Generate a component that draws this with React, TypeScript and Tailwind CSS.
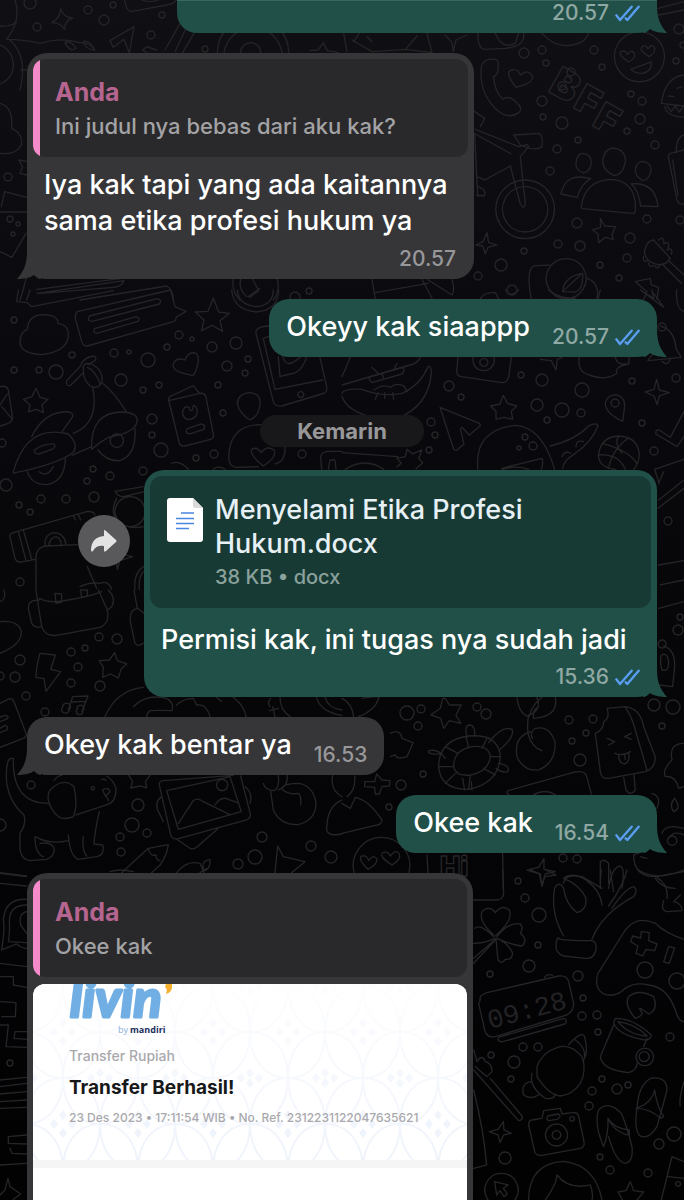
import type { ReactNode } from "react";

type Tile = { x: number; y: number; paths: string[] };

// Each tile holds its outlines at three times the drawn size.
const doodleTiles: Tile[] = [
  {
    x: 0,
    y: 0,
    paths: [
      "M182 26 Q188 52 218 54 Q194 62 194 88 Q182 68 155 68 Q180 56 182 26Z",
      "M45 0 Q65 60 20 118 Q70 118 120 130 Q180 110 240 128 Q280 130 285 152",
      "M0 78 Q28 82 50 66 M0 135 Q38 150 40 195 Q40 235 0 252",
      "M30 120 Q85 170 60 270 M62 210 L80 210",
      "M195 128 Q210 118 228 145 Q210 158 195 128Z M250 124 Q270 120 282 150 Q258 150 250 124Z",
      "M0 310 Q40 320 35 385 Q70 400 64 435 Q50 465 0 460",
      "M374 0 Q378 30 392 35 L500 15 Q526 10 528 0 M425 0 Q450 10 475 0",
      "M330 122 L402 80 L388 158 L372 118 L340 142Z M440 140 L428 150 L442 160 M440 140 L470 150",
      "M545 62 L495 150 M560 80 L525 155 M582 100 L548 158",
      "M652 158 A106 106 0 0 1 866 158 M672 158 A88 88 0 0 1 846 158 M722 158 A30 30 0 0 1 782 158",
      "M930 152 L955 150 L970 128 L982 152 L1015 158",
      "M4 620 L14 575 L80 592 M0 636 L80 636 M0 755 L36 772 L78 700",
      "M56 480 L80 484 M80 525 L60 520 L68 500 L56 480",
      "M78 836 Q70 870 60 900 M110 868 L360 836 M112 880 L372 842 Q366 860 340 862 L120 880Z M500 858 L240 900 M500 858 Q520 870 520 900",
      "M700 838 A70 70 0 0 0 720 900 M832 838 A70 70 0 0 1 820 900 M722 838 A50 50 0 0 0 740 890 M758 838 L776 872 L750 892",
    ],
  },
  {
    x: 342,
    y: 0,
    paths: [
      "M418 200 Q425 174 460 178 Q472 180 468 205 Q470 222 455 230 Q458 275 482 298 Q500 284 522 306 Q545 325 530 338 Q500 360 465 330 Q410 280 418 200Z",
      "M522 262 Q485 215 510 210 Q528 205 536 226 Q555 205 570 226 Q580 248 522 262Z",
      "M892 95 a75 75 0 1 0 1 0Z",
      "M860 186 Q820 158 842 153 Q852 152 856 164 Q868 146 877 160 Q884 172 860 186Z M922 170 Q885 148 904 138 Q914 136 918 147 Q928 130 937 142 Q944 154 922 170Z",
      "M866 208 L928 186 Q930 215 902 220 Q882 222 866 208Z",
      "M958 310 Q970 230 1026 225 M958 310 L1026 318 M968 320 Q975 350 1026 352 M975 318 L988 335 L1000 318 L1012 336 L1024 320 M980 288 L995 290 M1005 265 L1020 260",
      "M398 335 L428 355 L415 380 M400 388 L530 440 L555 434 L560 440 L535 470 L550 612 Q545 630 535 612 L505 498 L428 540 L404 530 L398 400 M400 402 L508 462",
      "M515 405 L590 400 Q604 405 600 440 Q580 455 535 435 L515 405Z",
      "M404 530 L408 590 M410 560 Q438 575 425 588 L404 585",
      "M549 540 a88 88 0 1 0 1 0Z M549 560 a68 68 0 1 0 1 0Z",
      "M725 460 Q750 465 748 490 Q742 520 722 518 Q700 510 702 488 Q705 460 725 460Z M815 444 Q852 450 850 485 Q842 528 815 526 Q780 510 782 480 Q788 445 815 444Z M903 484 Q930 490 927 512 Q920 542 902 542 Q880 530 880 508 Q885 484 903 484Z",
      "M718 620 Q728 540 810 538 Q885 545 880 632 Q880 642 870 640 L722 626 Q717 625 718 620Z M746 536 Q670 515 657 582 L706 592 Q715 555 746 536Z M868 552 Q940 545 948 620 L896 618 Q890 570 868 552Z",
      "M775 655 L788 678 L820 680 L810 705 L814 718 L790 712 L770 728 L768 702 L752 690 L776 682Z",
      "M435 698 L440 728 L465 735 L438 742 L430 762 L422 738 L402 735 L424 724Z",
      "M908 750 Q915 722 935 720 L985 775 Q970 800 940 792 Q905 780 908 750Z M950 720 Q965 705 966 730 M965 732 Q985 720 978 745 M975 750 Q995 742 988 762 M905 770 Q900 788 918 782 M920 788 Q920 805 935 796 M940 798 Q945 810 955 795",
      "M978 780 L1026 825 M960 792 L1018 850",
      "M980 475 Q975 460 995 458 L1026 450 M980 475 L1005 600 Q1010 615 1026 612 M1003 458 Q1002 410 1026 405 M992 480 L1008 585",
      "M568 898 Q550 800 580 797 L630 795 M672 776 a60 60 0 1 0 1 0Z M662 875 Q665 830 722 820 Q724 870 700 876Z M662 875 L715 825 M736 835 Q775 850 765 898",
      "M880 845 L925 835 L928 855 L950 862 L945 898 M880 845 L915 875 L905 898",
      "M30 120 L90 155 L190 148 L270 158 M55 95 L35 125 M190 148 L225 108 M75 110 L90 125 M255 100 L270 158 M5 100 L15 155 M310 105 L330 128 L334 155 L342 120 L375 105",
      "M408 100 Q405 145 430 148 L490 145 Q550 140 545 100 M460 100 Q480 150 520 130 L530 100 M600 100 Q640 145 690 135 Q730 130 740 100 M948 25 L1026 5 M950 45 L1026 30",
      "M90 838 L100 898 M240 838 L270 895 M255 838 L330 885 Q340 870 330 838 M100 878 L258 850",
    ],
  },
  {
    x: 0,
    y: 290,
    paths: [
      "M55 0 L50 35 L82 38 L95 50 L340 2 M90 0 L80 30",
      "M232 65 L512 0 L525 50 L558 64 L528 82 Q530 95 510 98 L262 168 Q250 170 245 155 L226 85 Q225 70 232 65Z",
      "M268 78 L472 26 Q488 30 478 42 L276 94 Q260 94 268 78Z M284 116 L408 80 Q424 84 414 94 L290 130 Q276 128 284 116Z",
      "M82 118 Q85 75 130 74 Q175 75 174 100 Q210 105 204 145 Q195 185 125 194 Q60 190 60 155 Q62 125 82 118Z",
      "M640 24 L656 66 L688 70 L660 92 L668 124 L636 106 L605 122 L612 90 L586 66 L624 64Z",
      "M695 0 Q700 60 770 66 Q835 60 836 0 M712 0 Q715 45 770 50 Q820 45 820 0 M745 20 L780 -5",
      "M568 254 Q515 245 520 222 Q530 200 555 210 Q565 182 588 190 Q605 205 582 254 Q576 258 568 254Z",
      "M108 295 L120 322 L144 328 L126 344 L130 368 L108 358 L86 366 L90 344 L70 328 L96 320Z",
      "M0 290 Q20 285 25 300 L38 385 Q38 400 0 408 M0 345 L22 312 M5 350 L35 385",
      "M240 230 Q245 205 280 198 Q292 200 285 212 L265 224 M240 230 L200 272 Q196 290 212 286 L248 250",
      "M250 240 Q245 215 275 222 Q310 240 306 275 Q295 300 270 288 Q250 270 250 240Z M262 232 Q285 240 300 280 M278 290 Q300 400 220 430 M308 280 Q345 310 378 364",
      "M95 440 Q130 370 190 366 Q220 362 218 380 L186 426 M40 545 Q80 400 205 432 Q235 460 222 485 Q180 520 46 548 Q38 552 40 545Z M104 480 Q130 460 162 462 Q170 470 155 478 L118 492 Q100 492 104 480Z",
      "M275 478 Q270 365 370 366 Q420 370 410 400 Q400 430 325 442 Q300 455 275 478Z M216 496 L275 470 M82 545 Q95 585 140 584 Q195 575 196 505 M294 480 Q320 515 360 512 Q410 495 405 415 M350 432 a20 20 0 1 0 1 0Z M118 545 Q140 565 160 530",
      "M506 330 Q505 320 520 315 L580 287 L598 310 M506 330 L538 460 Q542 470 555 468 L632 448 Q643 444 640 432 L618 322 Q615 308 600 310 L506 332",
      "M556 350 Q540 370 555 385 Q575 395 590 375 Q596 350 580 346 L578 360 Q568 365 568 352Z M562 416 L604 402 Q618 404 612 418 L570 432 Q552 430 562 416Z",
      "M750 308 Q785 312 780 345 Q775 380 750 390 Q718 370 712 340 Q715 310 750 308Z",
      "M806 108 Q765 110 768 130 L820 335 Q825 350 845 348 L965 312 Q985 308 980 290 L960 202 M806 140 L790 145 L825 298 L968 270 M835 200 L840 260 L870 252 Q905 250 920 200 M848 200 Q860 240 900 202 M902 305 a9 9 0 1 0 1 0Z",
      "M792 404 Q700 400 688 480 Q680 530 710 532 L775 530 M792 404 L835 410 M855 470 Q858 515 825 522 M790 528 Q748 495 755 478 Q770 468 784 488 Q800 465 822 480 Q832 500 790 528Z",
      "M965 538 L962 500 Q965 485 985 484 L1026 484 M985 538 L990 510 L1005 510 L1008 538",
      "M345 604 L430 590 M345 604 Q355 625 380 618 L432 605 M388 620 a45 45 0 1 0 5 0Z M350 625 Q330 665 350 690 Q380 720 430 710",
      "M30 740 Q25 730 50 725 L260 665 Q280 662 285 675 M30 740 L45 805 Q50 820 70 815 L105 808 M55 724 L78 812 M70 720 L95 808 M220 678 L226 690 M235 674 L242 690",
      "M108 898 L108 800 Q110 770 140 768 L232 764 M135 768 Q132 735 160 728 Q192 728 198 762 M146 768 Q150 742 168 740 Q182 745 184 764 M262 830 L290 895 M240 890 Q270 875 300 880 Q325 870 335 898",
      "M375 795 L398 800 L360 812 L352 838 L348 812 M405 898 Q400 850 430 830 M418 898 Q415 860 430 845 M515 520 Q540 510 565 538 M640 538 Q655 525 675 538",
    ],
  },
  {
    x: 342,
    y: 290,
    paths: [
      "M0 285 L215 222 Q230 215 235 202 M0 260 L25 202 M0 310 Q5 295 60 298 Q120 322 180 310 Q235 285 258 230 Q268 225 268 250 Q260 350 160 388 M0 318 Q10 355 70 376",
      "M78 262 L180 232 Q192 238 180 252 L90 278Z M120 250 L125 264 M90 232 L108 250 M155 240 L165 220 M95 300 Q125 280 145 292 Q165 275 188 290 M100 328 L108 308 M128 325 L128 308 M155 328 L152 308 M196 305 L186 290",
      "M348 202 L344 245 Q345 258 358 260 L480 278 Q495 278 500 262 L508 202 M394 202 A32 32 0 1 0 456 202 M425 205 a12 12 0 1 0 1 0Z",
      "M595 208 L628 212 L642 240 L646 208 L660 202 M712 202 Q705 245 740 254 Q790 275 825 250 Q815 230 860 222 L862 202 M820 202 Q825 225 850 222",
      "M918 212 L1018 202 M918 212 Q930 190 952 180 M955 108 Q998 120 1002 175 L1018 202 M960 214 Q975 230 985 208",
      "M842 394 Q790 370 790 340 Q795 315 822 314 Q850 320 848 350Z",
      "M944 268 L952 300 L982 308 L952 318 L946 344 L936 318 L910 306 L936 298Z",
      "M294 352 L412 400 Q418 408 410 412 L382 435 L360 412 Q352 415 358 428 L366 462 L345 480 Q336 482 334 475Z",
      "M484 316 L496 340 L524 348 L508 364 L512 388 L486 382 L462 388 L462 364 L446 348 L474 342Z",
      "M408 538 Q395 420 520 406 Q600 410 638 538 M560 538 Q520 525 480 538 M480 535 L600 505 Q605 520 598 538 M625 468 Q700 450 740 408 Q765 395 768 408 Q750 455 700 490 Q665 510 662 535 M660 500 Q670 480 685 490 M702 470 Q702 448 725 455",
      "M820 538 Q765 530 770 490 Q780 440 830 438 Q885 440 892 490 Q892 520 875 538 M780 460 Q860 480 884 520 M800 535 Q810 480 858 445 M770 495 Q830 490 850 538 M830 438 Q815 460 840 490",
      "M942 432 Q940 418 952 420 L985 442 L1026 365 M942 432 L1005 470 L1026 440",
      "M938 538 L1026 508 M938 538 Q955 590 950 580 L965 545 M948 655 L1026 595 M950 630 L1026 570 M950 825 L1026 812 M955 885 L1026 870",
      "M0 488 L168 500 M195 478 L212 492 L240 480 L230 505 L242 518 L222 536 M165 505 L190 500 L195 478 M165 505 L178 520 L165 530 M10 538 Q70 500 125 538",
      "M895 0 L935 25 L930 0 M895 0 L965 52 L935 10 M1004 0 Q1000 55 1026 65 M415 27 Q425 5 460 8 L470 27 M490 0 Q505 25 530 0 M620 0 Q650 25 700 26 M775 0 L768 26",
    ],
  },
  {
    x: 0,
    y: 590,
    paths: [
      "M108 0 L125 110 Q135 140 170 136 L300 112 Q330 100 322 60 L295 0 M118 25 Q150 42 205 30 Q270 20 305 5 M165 10 L185 12 L185 36 L168 40Z M242 0 L262 0 L262 18 L245 22Z M118 30 Q80 30 86 60 L95 100 Q105 115 125 110 M325 0 Q350 25 335 50 L322 60",
      "M0 95 Q55 90 64 125 Q65 165 0 190 M0 35 Q20 28 12 0 M402 0 L412 55 L432 70 M412 55 Q385 60 392 100 L405 160 Q415 172 430 160",
      "M120 190 L166 195 L152 238 L182 245 L138 304 L132 266 L108 262 Q108 230 120 190Z",
      "M344 188 L352 212 L380 222 L364 236 L355 264 L332 252 L308 262 L310 232 L298 212 L328 210Z",
      "M218 320 L264 318 L246 364 M218 320 L205 360 M212 336 L258 334 M188 352 a12 10 0 1 0 20 5 a12 10 0 1 0 -20 -5Z M232 358 a10 9 0 1 0 16 4 a10 9 0 1 0 -16 -4Z",
      "M0 340 L28 326 Q38 326 42 335 L78 430 Q82 440 70 445 L0 472 M0 382 L15 376 Q28 378 22 386 L0 395 M0 415 L15 406 Q28 410 20 420 L0 428",
      "M315 380 Q350 300 430 292 M400 350 Q440 310 500 325 Q525 340 515 362 Q480 360 450 362 Q440 370 440 380 M530 345 Q550 325 580 325 L590 345 Q620 340 630 380 M650 322 L665 335 M700 322 Q735 350 738 380 M810 350 Q800 340 812 325 M808 362 L835 355 M818 350 L825 380 M840 322 Q840 360 870 380 M950 322 Q960 365 1026 376 M975 322 Q985 355 1026 360",
      "M38 505 Q15 500 20 580 Q30 640 72 675 Q80 700 60 730 L60 780 Q65 810 90 812 L140 808 Q165 800 162 775 Q155 755 120 760 M40 505 Q35 640 145 640 M105 740 Q150 765 205 752 M205 735 Q210 800 235 808 L290 800 Q315 795 308 765 L282 762 Q285 720 298 665 M250 740 Q245 780 260 798 M105 740 Q105 790 130 800",
      "M150 600 Q190 560 222 590 Q235 650 220 680 Q185 695 165 670 Q140 640 145 612Z M162 572 Q170 558 185 556 M228 675 L320 645 Q350 635 348 595 Q340 570 320 558 M278 590 a5 5 0 1 0 1 0Z M308 600 Q325 590 330 605 L316 618Z M318 618 L326 632 M305 570 Q310 562 318 572",
      "M478 585 Q475 575 490 572 L700 556 M478 585 L512 735 Q518 750 535 746 L740 690 Q755 682 750 668 L722 558 M500 602 L690 560 L724 665 L535 718Z M535 700 L580 632 Q592 622 608 634 L690 674 M645 645 Q665 615 690 630 L712 638 M666 568 a17 17 0 1 0 1 0Z M484 620 Q460 640 478 670 L490 695 M736 590 Q760 610 750 640 M530 748 L570 775 Q580 780 590 772 L655 715",
      "M386 556 L398 574 L392 594 L420 588 L440 594 L436 574 L450 556",
      "M790 580 Q795 600 822 602 Q840 595 835 556 M835 600 Q865 590 862 556 M812 602 L820 660 Q840 705 895 704 Q950 690 948 635 Q935 580 890 580 Q840 582 848 600 Q870 615 895 610 Q905 620 902 645 M998 556 Q990 600 1026 620 M1026 630 Q980 650 980 720 Q985 740 1026 732",
      "M365 848 L445 775 L505 764 Q500 800 480 825 L455 848 M445 775 Q450 800 468 795 Q468 810 480 812 M530 848 Q560 810 600 820 L612 848 M612 838 Q600 815 630 808 Q632 835 615 842 M833 768 L850 800 L915 815 L875 848 M833 768 L825 848",
      "M0 848 L80 858 M0 880 L80 888",
    ],
  },
  {
    x: 342,
    y: 590,
    paths: [
      "M310 325 L322 345 L358 345 L342 375 L356 400 L322 392 L305 415 L296 385 L266 375 L295 355 L302 325Z",
      "M375 440 Q365 405 385 405 Q400 408 398 438 M440 458 Q480 405 510 418 Q520 440 472 480 M298 492 Q255 495 260 482 Q290 475 310 505 M470 520 Q505 525 498 545 Q480 550 462 535 M368 600 L362 565 M390 600 L388 575",
      "M290 530 Q290 450 380 438 Q470 430 475 500 Q470 580 380 598 Q295 600 290 530Z M335 530 Q335 480 390 470 Q440 465 445 500 Q440 545 385 555 Q340 560 335 530Z M310 470 L348 490 M372 440 L380 472 M435 445 L420 475 M475 500 L445 500 M460 555 L425 535 M385 555 L380 598 M345 545 L310 580 M335 530 L290 530",
      "M525 322 Q530 370 560 380 M562 378 Q570 345 600 322 M562 375 Q600 360 585 322 M640 322 Q650 380 575 385 Q570 360 590 350 M560 375 Q545 460 600 482 M566 425 Q515 440 525 500 Q545 545 590 540 Q640 520 640 460 Q625 405 580 415 Q560 430 572 445",
      "M795 355 L850 350 Q895 355 905 410 L940 500 Q940 535 910 545 L800 565 Q778 568 775 545 L760 430 Q785 420 785 395 Q805 385 795 355Z M850 352 Q870 380 880 420 L915 540 M845 562 L852 600 Q865 620 880 600 L876 555",
      "M796 445 L818 455 L800 465 M868 430 L848 440 L868 448 M818 490 Q840 500 865 485 M830 495 Q830 520 848 522 Q865 515 860 490 M848 495 L850 508",
      "M145 430 Q175 415 180 445 L213 458 L195 500 Q165 510 160 495 L145 500 M104 552 L120 570 L144 572 L142 588 L120 590 L112 612 L100 612 L98 592 L68 590 L68 575 L98 575Z M38 558 Q42 600 15 620 M0 640 L25 655 L40 622 Q80 630 120 690 Q120 705 100 706 L0 730",
      "M498 602 L700 546 Q730 540 735 562 L748 612 M498 602 Q490 610 500 614 M575 614 Q610 595 640 614",
      "M116 742 a85 85 0 0 1 85 106 M116 742 a85 85 0 0 0 -80 106 M78 838 Q45 805 60 798 Q75 795 80 812 Q95 790 105 808 Q105 825 78 838Z M150 825 Q110 800 122 788 Q138 782 145 798 Q162 775 172 792 Q178 808 150 825Z",
      "M606 806 L606 838 L640 845 L610 852 L600 888 L592 852 L562 838 L590 832Z M665 880 Q670 850 720 860 L780 895 M775 895 L775 815 Q785 805 800 820 L800 880 M800 895 Q810 830 835 828 Q850 835 840 895",
      "M875 795 Q875 860 940 860 L1026 845 M875 795 L915 780 M895 800 L915 805 M1026 715 Q970 700 960 730 M1026 735 Q995 720 980 745 M990 738 a14 14 0 1 0 1 0Z M940 865 Q960 895 1000 895",
      "M1026 460 Q980 460 990 510 Q960 540 970 560 Q1000 555 1010 595 L1026 590 M930 610 Q960 620 945 655 M998 625 Q980 645 995 665 Q1020 655 998 625Z",
      "M950 55 L1026 35 M960 150 a12 12 0 1 0 1 0Z M965 168 Q1000 180 998 230 L992 290 L950 285 M958 195 Q978 185 980 220 Q980 245 960 240 Q952 215 958 195Z",
      "M255 795 L258 848 M482 790 L484 898 M0 325 Q30 340 35 380 M60 325 Q120 315 110 325 Q100 360 50 380",
    ],
  },
  {
    x: 0,
    y: 870,
    paths: [
      "M80 88 Q15 85 10 150 Q15 175 5 240 L50 222 Q65 235 80 235 M80 105 Q30 105 28 150 Q30 190 25 215 L80 218 M80 125 Q55 130 62 165 L80 190",
      "M0 280 L80 290 M0 320 L40 320 L40 345 L80 352 M2 395 L48 398 L46 440 L5 440 M0 465 L25 465 L18 530 L80 532 M80 485 L45 485 L42 505 L80 508",
      "M0 630 L80 622 M0 650 L80 640 M0 672 L80 665 M0 695 L80 690 M0 715 L80 712 M25 800 L80 795 M25 800 L25 820 L80 822 M30 835 L35 850 L80 852 M0 885 L80 880",
      "M24 925 L30 950 L62 972 L38 990 M24 925 L15 960 L0 975",
      "M0 10 L80 20 M330 5 Q360 -5 400 5 M600 8 L620 -4",
    ],
  },
  {
    x: 342,
    y: 870,
    paths: [
      "M395 90 L465 90 Q485 88 485 70 L482 0",
      "M455 195 Q405 150 422 122 Q445 105 460 128 Q480 102 502 120 Q515 150 460 198 M465 200 Q500 155 535 162 Q545 175 535 190 Q560 210 540 228 Q510 225 465 205 M462 205 L468 270 Q478 285 490 268 Q510 270 512 250 Q500 220 465 205 M455 200 Q415 160 398 175 M395 220 Q430 220 458 205 M395 265 L458 210 M395 280 L460 210",
      "M645 205 Q662 212 750 212 Q765 215 762 240 Q755 268 730 265 L665 258 Q640 250 642 225 Q642 210 650 203 M665 198 Q625 130 638 55 Q650 30 665 55 Q670 100 705 128 Q735 120 732 85 Q715 45 665 25 Q690 5 730 28 Q775 60 780 105 M750 208 Q780 130 875 80 Q890 60 875 50 Q850 55 810 115 M775 30 L778 0 M800 108 Q845 45 855 0 M805 0 L815 65",
      "M555 0 L595 12 L600 48 L608 20 L642 15 L612 0 M890 0 Q940 35 1026 0 M945 22 Q980 45 975 85 M965 92 Q955 120 975 125 L1020 122 Q1020 100 995 95 L1015 75",
      "M1026 208 Q970 190 940 160 Q885 135 850 180 L768 310 Q755 355 785 372 Q820 385 850 355 Q880 335 920 345 Q975 350 1000 420 Q1010 455 1026 455",
      "M898 185 L922 188 L920 212 L945 222 L938 242 L912 238 L902 258 L882 250 L888 228 L866 215 L872 198 L896 204Z M980 230 L998 234 L982 280 L965 276Z",
      "M415 390 Q410 375 435 368 L650 318 Q675 315 680 335 L695 400 Q695 425 675 435 L460 500 Q435 505 428 480 L410 400Z M470 502 L665 445 Q680 450 668 462 L480 516 Q462 512 470 502Z M608 322 Q615 310 632 316",
      "M585 590 Q600 545 655 530 Q690 525 720 560 Q735 600 715 640 Q690 675 655 678 Q620 675 585 620Z M680 524 Q720 480 728 500 Q740 550 725 570 M700 510 Q730 530 728 560 M570 610 Q560 650 610 685 Q635 690 640 672 M568 635 Q535 640 545 675 Q565 690 590 675",
      "M820 445 Q875 445 928 495 Q925 515 900 508 Q830 495 815 460Z M828 455 Q880 462 915 498 Q860 495 828 455Z M815 465 L775 560 Q780 600 860 608 Q885 600 885 580 M915 505 L905 530 M908 535 a26 26 0 1 0 1 0Z M906 545 a15 15 0 1 0 1 0Z M880 445 Q845 405 860 380 Q890 355 935 380 Q950 420 920 432 Q885 405 895 420 Q910 435 880 445Z",
      "M395 540 L405 575 Q420 550 430 575 Q450 580 450 605 L435 620 L400 590 M395 600 L530 752 Q545 750 540 738 L445 625",
      "M570 750 Q560 750 560 765 L578 845 Q582 858 600 856 L715 835 Q730 830 726 815 L710 738 Q705 725 690 728 L660 732 L655 715 L605 722 L600 745Z M618 738 L650 732 Q660 740 645 748 L620 752 Q610 745 618 738Z M643 762 a33 33 0 1 0 1 0Z M643 782 a13 13 0 1 0 1 0Z M690 740 a7 7 0 1 0 1 0Z",
      "M785 830 Q755 760 770 720 Q800 690 838 730 Q855 770 870 830 Q875 875 850 880 Q820 875 800 800 M785 830 Q800 790 798 745 M798 745 Q820 790 862 795 L862 780 Q815 775 798 745",
      "M885 715 Q890 640 930 624 Q975 620 975 660 Q965 700 945 770 Q920 810 895 798 Q875 780 885 715Z M882 715 Q930 700 938 660 Q945 710 965 740 L955 745 Q925 715 882 715",
      "M484 755 L486 780 L508 790 L485 795 L474 818 L468 795 L442 785 L468 778Z M395 660 Q425 780 434 885 L395 895",
      "M478 910 a50 50 0 1 0 1 0Z M458 935 L498 945 L484 955 L496 972 L486 980 L474 962 L464 975Z",
      "M560 990 Q560 880 665 874 Q760 885 780 990 M610 990 Q645 940 645 915 Q680 960 745 945 Q755 970 750 990",
      "M865 935 L875 962 L905 966 L885 990 M865 935 L852 962 L828 966 L842 990 M990 860 L958 990 M990 860 L1026 875 M978 920 L1026 925 M1008 935 a7 7 0 1 0 1 0Z M1026 635 Q1010 690 1015 708",
    ],
  },
];

// Small rings scattered between the doodles: x, y, radius.
const rings = [
  [30, 3, 6], [88, 10, 4], [104, 20, 5], [113, 5, 3], [37, 27, 4], [151, 35, 4], [162, 15, 3], [205, 49, 3], [8, 177, 4],
  [10, 219, 3], [18, 224, 2], [13, 234, 2], [309, 291, 3], [295, 297, 5], [524, 53, 5], [542, 50, 4], [546, 63, 3],
  [594, 50, 4], [602, 67, 3], [542, 101, 5], [543, 117, 3], [562, 123, 6], [578, 140, 3], [557, 149, 4], [550, 171, 4],
  [631, 94, 3], [642, 101, 4], [640, 119, 5], [627, 131, 3], [650, 130, 3], [655, 145, 4], [679, 29, 5], [683, 45, 3],
  [676, 61, 3], [577, 223, 5], [558, 244, 4], [580, 246, 5], [524, 251, 3], [501, 265, 6], [478, 276, 4], [512, 290, 5],
  [600, 265, 3], [619, 278, 3], [630, 238, 5], [647, 219, 4], [627, 258, 4], [680, 220, 4], [14, 320, 3], [72, 355, 3],
  [14, 370, 3], [39, 370, 3], [56, 372, 7], [114, 353, 4], [129, 352, 2], [148, 360, 7], [167, 347, 3], [179, 335, 4],
  [192, 339, 2], [212, 347, 5], [236, 343, 6], [248, 359, 3], [227, 366, 5], [245, 373, 3], [218, 385, 3], [159, 385, 3],
  [143, 390, 3], [121, 380, 6], [152, 419, 5], [152, 435, 3], [161, 450, 7], [223, 413, 3], [2, 443, 4], [6, 485, 6],
  [93, 469, 3], [110, 476, 4], [87, 481, 3], [94, 497, 5], [66, 499, 4], [41, 499, 4], [19, 505, 3], [30, 512, 3],
  [143, 471, 4], [214, 454, 4], [196, 458, 3], [302, 454, 4], [20, 582, 4], [449, 386, 5], [461, 397, 3], [521, 375, 3],
  [542, 380, 6], [582, 390, 7], [537, 405, 6], [562, 410, 7], [581, 413, 4], [547, 420, 3], [632, 381, 3], [676, 378, 4],
  [615, 403, 4], [642, 423, 3], [654, 451, 4], [431, 422, 4], [435, 435, 3], [429, 450, 3], [668, 521, 4], [525, 437, 3],
  [533, 446, 4], [519, 448, 2], [662, 327, 4], [99, 637, 4], [117, 639, 5], [85, 648, 3], [71, 652, 4], [20, 660, 5],
  [0, 676, 4], [15, 677, 5], [78, 667, 4], [71, 683, 4], [100, 686, 5], [26, 696, 4], [45, 712, 4], [31, 785, 4],
  [138, 805, 6], [132, 825, 7], [147, 833, 4], [120, 837, 4], [121, 852, 4], [262, 837, 5], [255, 857, 7], [238, 864, 5],
  [311, 846, 5], [331, 857, 6], [0, 825, 6], [407, 713, 7], [421, 709, 4], [418, 726, 4], [477, 707, 4], [486, 714, 5],
  [569, 720, 4], [593, 719, 4], [586, 733, 3], [572, 741, 3], [580, 760, 6], [654, 705, 6], [673, 707, 7], [662, 726, 3],
  [423, 774, 3], [401, 785, 5], [389, 807, 3], [518, 881, 3], [563, 858, 4], [577, 859, 4], [678, 630, 5], [680, 617, 3],
  [525, 898, 4], [539, 915, 7], [538, 945, 3], [529, 966, 6], [578, 976, 5], [490, 974, 3], [583, 998, 3], [582, 1016, 4],
  [597, 1015, 4], [598, 1032, 3], [523, 1047, 4], [538, 1047, 4], [491, 1055, 3], [514, 1062, 6], [511, 1079, 3],
  [592, 1091, 4], [617, 1089, 5], [628, 1085, 3], [602, 1079, 3], [589, 1106, 4], [670, 1037, 4], [674, 1134, 7],
  [659, 1144, 5], [600, 1157, 3], [610, 1170, 4], [648, 1173, 4], [505, 1158, 6], [645, 970, 8], [677, 981, 8],
  [10, 1063, 3], [571, 72, 4], [562, 86, 4],
];

function Wallpaper() {
  return (
    <svg
      aria-hidden="true"
      className="absolute inset-0 h-full w-full"
      fill="none"
      preserveAspectRatio="xMidYMin slice"
      stroke="#252528"
      strokeLinecap="round"
      strokeLinejoin="round"
      viewBox="0 0 684 1200"
    >
      {doodleTiles.map((tile) => (
        <g key={`${tile.x}-${tile.y}`} strokeWidth="4" transform={`translate(${tile.x} ${tile.y}) scale(0.3333)`}>
          {tile.paths.map((d) => (
            <path d={d} key={d} />
          ))}
        </g>
      ))}
      <g strokeWidth="1.4">
        {rings.map(([x, y, r]) => (
          <circle cx={x} cy={y} key={`${x}-${y}`} r={r} />
        ))}
      </g>
      <g fontFamily="Inter, sans-serif" fontWeight="900" strokeWidth="1.3">
        <text fontSize="40" transform="translate(547 91) rotate(29)">B</text>
        <text fontSize="38" transform="translate(572 107) rotate(29)">F</text>
        <text fontSize="38" transform="translate(591 125) rotate(29)">F</text>
        <text fontSize="27" transform="translate(440 876)">Hi</text>
      </g>
      <text
        fill="#222225"
        fontFamily="Liberation Mono, monospace"
        fontSize="27"
        stroke="none"
        transform="translate(490 1029) rotate(-15)"
      >
        09:28
      </text>
    </svg>
  );
}

function Tail({ side }: { side: "left" | "right" }) {
  return (
    <svg
      aria-hidden="true"
      className={
        side === "right"
          ? "absolute -right-[10px] bottom-0 h-7 w-6 text-[#215049]"
          : "absolute -left-[10px] bottom-0 h-7 w-6 -scale-x-100 text-[#363638]"
      }
      viewBox="0 0 24 28"
    >
      <path d="M0 0H14C14 13 17 20 24 28C18 28 11 27 7 24C5 26 3 28 0 28Z" fill="currentColor" />
    </svg>
  );
}

function Ticks() {
  return (
    <svg
      aria-label="Dibaca"
      className="h-[17px] w-[25px] shrink-0"
      fill="none"
      role="img"
      stroke="#5a9ef3"
      strokeLinecap="round"
      strokeLinejoin="round"
      strokeWidth="7"
      viewBox="0 0 75 51"
    >
      <path d="M4 31L15 45L50 5" />
      <path d="M32 40L37 45L71 5" />
    </svg>
  );
}

function Meta({ time, sent = false }: { time: string; sent?: boolean }) {
  return (
    <span className="flex shrink-0 items-center gap-[6px]">
      <time className={`text-[21px] leading-6 font-medium ${sent ? "text-[#8fa8a3]" : "text-[#98989b]"}`}>{time}</time>
      {sent && <Ticks />}
    </span>
  );
}

function Bubble({ sent = false, className = "", children }: { sent?: boolean; className?: string; children: ReactNode }) {
  return (
    <article
      className={`relative max-w-full rounded-[20px] text-[27px] leading-9 font-medium text-white ${
        sent ? "self-end bg-[#215049]" : "self-start bg-[#363638]"
      } ${className}`}
    >
      <Tail side={sent ? "right" : "left"} />
      {children}
    </article>
  );
}

function ShortMessage({ text, time, sent = false }: { text: string; time: string; sent?: boolean }) {
  return (
    <Bubble className="flex items-end gap-[22px] px-[17px] pt-[10px] pb-[8px]" sent={sent}>
      <p className="pb-[4px]">{text}</p>
      <Meta sent={sent} time={time} />
    </Bubble>
  );
}

function Quote({ text }: { text: string }) {
  return (
    <blockquote className="flex overflow-hidden rounded-xl bg-[#29292b]">
      <span className="w-[7px] shrink-0 bg-[#f58bcb]" />
      <div className="pt-[17px] pb-[13px] pl-[15px]">
        <p className="text-[25px] leading-8 font-bold text-[#b5658f]">Anda</p>
        <p className="text-[22px] leading-9 font-medium text-[#a3a3a6]">{text}</p>
      </div>
    </blockquote>
  );
}

function LivinLogo() {
  return (
    <svg aria-label="livin' by mandiri" className="block h-[52px] w-[110px]" role="img" viewBox="0 0 110 52">
      <text
        fill="#70aee3"
        fontFamily="Lato, sans-serif"
        fontSize="52"
        fontStyle="italic"
        fontWeight="700"
        stroke="#70aee3"
        strokeLinejoin="round"
        strokeWidth="3"
        x="1"
        y="33"
      >
        livin
      </text>
      <path d="M97 0H103Q104 8 97 10Q99 5 96 3Z" fill="#f4b02d" />
      <text fill="#86aede" fontFamily="Open Sans, sans-serif" fontSize="9" x="49" y="49">
        by
      </text>
      <text fill="#1b2f60" fontFamily="Open Sans, sans-serif" fontSize="9" fontWeight="700" x="61" y="49">
        mandiri
      </text>
    </svg>
  );
}

function Receipt() {
  return (
    <div className="mt-[7px] h-[240px] overflow-hidden rounded-t-xl bg-white">
      <div className="relative h-[176px] overflow-hidden">
        <svg aria-hidden="true" className="absolute inset-0 h-full w-full">
          <defs>
            <pattern height="92" id="kawung" patternUnits="userSpaceOnUse" width="75" x="30" y="2">
              <g fill="none" stroke="#eff3fb" strokeWidth="2">
                <path d="M0 0C24 0 37 20 37 46C14 46 0 26 0 0ZM75 0C51 0 37 20 37 46C61 46 75 26 75 0Z" />
                <path d="M0 92C24 92 37 72 37 46C14 46 0 66 0 92ZM75 92C51 92 37 72 37 46C61 46 75 66 75 92Z" />
              </g>
              <g fill="#edf2fb">
                <path d="M37 82l4 5-4 5-4-5ZM28 -5l4 5-4 5-4-5ZM46 -5l4 5-4 5-4-5ZM37 0l4 5-4 5-4-5Z" />
                <path d="M28 87l4 5-4 5-4-5ZM46 87l4 5-4 5-4-5Z" />
                <path d="M0 32l4 5-4 5-4-5ZM0 50l4 5-4 5-4-5ZM9 41l4 5-4 5-4-5ZM66 41l4 5-4 5-4-5ZM75 32l4 5-4 5-4-5ZM75 50l4 5-4 5-4-5Z" />
              </g>
            </pattern>
            <linearGradient id="fade" x2="0" y2="1">
              <stop offset="0" stopColor="#fff" stopOpacity="0.9" />
              <stop offset="1" stopColor="#fff" stopOpacity="0" />
            </linearGradient>
          </defs>
          <rect fill="url(#kawung)" height="100%" width="100%" />
          <rect fill="url(#fade)" height="100%" width="100%" />
        </svg>
        <div className="relative pl-9">
          <LivinLogo />
          <p className="pt-2 text-[14px] leading-6 text-[#a9a9ad]">Transfer Rupiah</p>
          <p className="text-[19px] leading-10 font-bold text-[#17181a]">Transfer Berhasil!</p>
          <p className="text-[12px] leading-5 whitespace-nowrap text-[#a9a9ad]">
            23 Des 2023 • 17:11:54 WIB • No. Ref. 2312231122047635621
          </p>
        </div>
      </div>
      <div className="h-2 bg-[#f5f5f6]" />
    </div>
  );
}

function DocIcon() {
  return (
    <svg aria-hidden="true" className="mt-[5px] h-11 w-9 shrink-0" viewBox="0 0 36 44">
      <path d="M3 0H26L36 10V41Q36 44 33 44H3Q0 44 0 41V3Q0 0 3 0Z" fill="#fff" />
      <path d="M26 0L36 10H28Q26 10 26 8Z" fill="#d9dadb" />
      <path d="M14 15H27M9 20.500H27M9 25.500H27M9 30.500H22" stroke="#4a86e0" strokeWidth="1.700" />
    </svg>
  );
}

export default function App() {
  return (
    <main className="relative h-screen overflow-hidden bg-linear-to-b from-[#0f0f14] via-[#07070a] to-[#020203] font-['Inter','Liberation_Sans',sans-serif]">
      <Wallpaper />
      <div className="relative flex flex-col gap-5 px-[27px]">
        <Bubble className="flex h-[33px] w-[480px] items-start justify-end rounded-t-none border-t border-[#3b6660] px-[17px]" sent>
          <Meta sent time="20.57" />
        </Bubble>

        <Bubble className="w-[447px] p-[6px]">
          <Quote text="Ini judul nya bebas dari aku kak?" />
          <p className="px-[11px] pt-[10px]">Iya kak tapi yang ada kaitannya sama etika profesi hukum ya</p>
          <div className="flex justify-end pt-[8px] pr-[12px] pb-[2px]">
            <Meta time="20.57" />
          </div>
        </Bubble>

        <ShortMessage sent text="Okeyy kak siaappp" time="20.57" />

        <h2 className="mt-[38px] mb-[3px] self-center rounded-full bg-[#18181a] px-[37px] text-[22px] leading-8 font-bold text-[#98989b]">
          Kemarin
        </h2>

        <div className="flex items-start gap-[14px] self-end">
          <button
            aria-label="Teruskan"
            className="mt-[45px] flex size-[52px] shrink-0 items-center justify-center rounded-full bg-[#59595c]"
            type="button"
          >
            <svg aria-hidden="true" className="h-[22px] w-[26px]" viewBox="0 0 26 22">
              <path
                d="M13 1Q13 -1 15 1L25 10Q26 11 25 12L15 21Q13 23 13 20V16Q5 15 2 21Q0 23 0 19Q1 7 13 6Z"
                fill="#e3e3e4"
              />
            </svg>
          </button>
          <Bubble className="w-[513px] p-[6px]" sent>
            <a className="flex gap-[12px] rounded-xl bg-[#183a34] px-[17px] pt-[17px] pb-[15px]" href="#dokumen">
              <DocIcon />
              <span className="flex flex-col">
                <span className="leading-[34px] text-[#e6f0f5]">Menyelami Etika Profesi Hukum.docx</span>
                <span className="text-[20px] leading-8 text-[#8aa19c]">38 KB • docx</span>
              </span>
            </a>
            <p className="px-[11px] pt-[14px]">Permisi kak, ini tugas nya sudah jadi</p>
            <div className="flex justify-end pt-[7px] pr-[11px] pb-[2px]">
              <Meta sent time="15.36" />
            </div>
          </Bubble>
        </div>

        <ShortMessage text="Okey kak bentar ya" time="16.53" />
        <ShortMessage sent text="Okee kak" time="16.54" />

        <Bubble className="w-[446px] p-[6px]">
          <Quote text="Okee kak" />
          <Receipt />
        </Bubble>
      </div>
    </main>
  );
}
